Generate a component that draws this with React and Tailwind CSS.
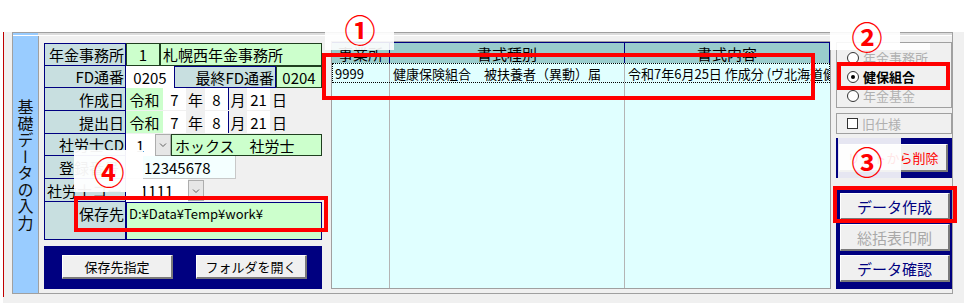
import React from "react";

const Chevron = () => (
  <svg width="10" height="10" viewBox="0 0 10 10" className="block">
    <path d="M2 3.5 L5 6.5 L8 3.5" fill="none" stroke="#606060" strokeWidth="1" />
  </svg>
);

function Radio({ checked, disabled, label }) {
  return (
    <div className="flex items-center h-[19px] pl-[10px] gap-[4px]">
      <div className="w-[12px] h-[12px] rounded-full border border-[#333333] bg-white flex items-center justify-center">
        {checked && <div className="w-[4px] h-[4px] rounded-full bg-black" />}
      </div>
      <span className={disabled ? "text-[13px] leading-none text-[#b0b0b0]" : "text-[13px] leading-none text-black font-bold"}>{label}</span>
    </div>
  );
}

export default function App() {
  return (
    <div className="relative w-[964px] h-[303px] bg-white overflow-hidden font-['Noto_Sans_CJK_JP','Noto_Sans',sans-serif] text-black">
      <div className="h-[32px]" />
      <div className="flex h-[271px] bg-[#f0f0f0]">
        <div className="w-[3px] bg-white" />
        <div className="w-[1px] h-[265px] bg-[#c00000]" />
        <div className="w-[8px]" />
        {/* frame */}
        <div className="w-[941px] h-[262px] border border-[#a0a0a0] flex flex-col">
          <div className="flex h-[2px]">
            <div className="w-[25px] bg-[#99ccff]" />
            <div className="flex-1 bg-[#dcdcdc]" />
          </div>
          <div className="h-[1px] bg-white" />
          <div className="flex h-[257px]">
            {/* blue side panel */}
            <div className="w-[25px] bg-[#99ccff] flex items-center justify-center">
              <span className="[writing-mode:vertical-rl] text-[16px] leading-none tracking-[0.5px] text-[#101010]">基礎データの入力</span>
            </div>
            <div className="w-[1px] bg-[#a0a0a0]" />
            {/* content */}
            <div className="flex items-start pl-[5px]">
              {/* left form */}
              <div className="w-[278px] mt-[7px] flex flex-col text-[15px] leading-none">
                {/* row 1 */}
                <div className="flex h-[23px]">
                  <div className="w-[82px] bg-[#c8dfe0] border border-[#000080] flex items-center justify-end pr-[1px]">年金事務所</div>
                  <div className="w-[34px] bg-[#ccffcc] border border-[#1f3f1f] flex items-center justify-center">1</div>
                  <div className="w-[162px] bg-[#ccffcc] border border-[#1f3f1f] flex items-center pl-[2px]">札幌西年金事務所</div>
                </div>
                {/* row 2 */}
                <div className="flex h-[22px]">
                  <div className="w-[82px] bg-[#c8dfe0] border-x border-b border-[#000080] flex items-center justify-end pr-[1px]">FD通番</div>
                  <div className="w-[48px] bg-white flex items-center justify-center">0205</div>
                  <div className="w-[102px] bg-[#c8dfe0] border border-[#000080] flex items-center justify-end pr-[1px]">最終FD通番</div>
                  <div className="w-[46px] bg-[#ccffcc] border border-[#1f3f1f] flex items-center justify-center">0204</div>
                </div>
                {/* row 3 */}
                <div className="flex h-[23px]">
                  <div className="w-[82px] bg-[#c8dfe0] border-x border-b border-[#000080] flex items-center justify-end pr-[1px]">作成日</div>
                  <div className="w-[37px] h-[22px] bg-[#ccffcc] flex items-center justify-center">令和</div>
                  <div className="w-[23px] h-[22px] bg-white flex items-center justify-center">7</div>
                  <div className="w-[19px] h-[22px] flex items-center justify-center">年</div>
                  <div className="w-[23px] h-[22px] bg-white flex items-center justify-center">8</div>
                  <div className="w-[19px] h-[22px] border-l border-[#000080] flex items-center justify-center">月</div>
                  <div className="w-[23px] h-[22px] bg-white flex items-center justify-center">21</div>
                  <div className="w-[19px] h-[22px] flex items-center justify-center">日</div>
                </div>
                {/* row 4 */}
                <div className="flex h-[23px]">
                  <div className="w-[82px] bg-[#c8dfe0] border-x border-b border-[#000080] flex items-center justify-end pr-[1px]">提出日</div>
                  <div className="w-[37px] h-[22px] bg-[#ccffcc] flex items-center justify-center">令和</div>
                  <div className="w-[23px] h-[22px] bg-white flex items-center justify-center">7</div>
                  <div className="w-[19px] h-[22px] flex items-center justify-center">年</div>
                  <div className="w-[23px] h-[22px] bg-white flex items-center justify-center">8</div>
                  <div className="w-[19px] h-[22px] border-l border-[#000080] flex items-center justify-center">月</div>
                  <div className="w-[23px] h-[22px] bg-white flex items-center justify-center">21</div>
                  <div className="w-[19px] h-[22px] flex items-center justify-center">日</div>
                </div>
                {/* row 5 */}
                <div className="flex h-[22px]">
                  <div className="w-[82px] bg-[#c8dfe0] border-x border-b border-[#000080] flex items-center justify-end pr-[1px]">社労士CD</div>
                  <div className="w-[29px] bg-white flex items-center pl-[10px]">1</div>
                  <div className="w-[16px] bg-[#e6e6e6] border border-[#adadad] flex items-center justify-center"><Chevron /></div>
                  <div className="w-[151px] bg-[#ccffcc] border border-[#1f3f1f] flex items-center pl-[3px]">ホックス　社労士</div>
                </div>
                {/* row 6 */}
                <div className="flex h-[23px]">
                  <div className="w-[82px] bg-[#c8dfe0] border-x border-b border-[#000080] flex items-center justify-end pr-[6px]">登録番号</div>
                  <div className="w-[110px] bg-[#f4ffff] border-r border-b border-[#c8c8c8] flex items-center pl-[18px]">12345678</div>
                </div>
                {/* row 7 */}
                <div className="flex h-[23px]">
                  <div className="w-[82px] bg-[#c8dfe0] border-x border-b border-[#000080] flex items-center pl-[2px] whitespace-nowrap">社労士コード</div>
                  <div className="w-[62px] bg-white flex items-center pl-[14px]">1111</div>
                  <div className="w-[16px] h-[21px] mt-[1px] bg-[#e6e6e6] border border-[#adadad] flex items-center justify-center"><Chevron /></div>
                </div>
                {/* row 8 */}
                <div className="flex h-[38px]">
                  <div className="w-[82px] bg-[#c8dfe0] border-x border-b border-[#000080] flex justify-end pr-[1px] pt-[4px]">保存先</div>
                  <div className="w-[196px] bg-[#ccffcc] border border-[#000080] pl-[2px] pt-[4px] text-[13px]">D:¥Data¥Temp¥work¥</div>
                </div>
                {/* navy button panel */}
                <div className="mt-[6px] h-[43px] bg-[#000080] flex items-start pt-[9px] pl-[18px] gap-[23px] text-[13px]">
                  <div className="w-[111px] h-[24px] bg-[#f0f0f0] border-t border-l border-t-white border-l-white border-r-2 border-b-2 border-r-[#7a7a7a] border-b-[#7a7a7a] flex items-center justify-center">保存先指定</div>
                  <div className="w-[111px] h-[24px] bg-[#f0f0f0] border-t border-l border-t-white border-l-white border-r-2 border-b-2 border-r-[#7a7a7a] border-b-[#7a7a7a] flex items-center justify-center">フォルダを開く</div>
                </div>
              </div>

              <div className="w-[9px]" />

              {/* grid */}
              <div className="mt-[5px] w-[500px] h-[248px] border border-[#a0a0a0] bg-[#e0ffff] flex flex-col">
                <div className="flex h-[21px] bg-[#99cccc] border-t border-[#000080] text-[15px] leading-none">
                  <div className="w-[58px] border-r border-[#000080] flex items-center justify-center">事業所</div>
                  <div className="w-[235px] border-r border-[#000080] flex items-center justify-center">書式種別</div>
                  <div className="flex-1 border-r border-[#000080] flex items-center justify-center">書式内容</div>
                </div>
                <div className="flex h-[20px] border border-dotted border-black text-[13px] leading-none whitespace-nowrap overflow-hidden">
                  <div className="w-[57px] border-r border-[#b4b4b4] flex items-center pl-[2px]">9999</div>
                  <div className="w-[235px] border-r border-[#b4b4b4] flex items-center pl-[3px]">健康保険組合　被扶養者（異動）届</div>
                  <div className="flex-1 flex items-center pl-[3px] overflow-hidden">令和7年6月25日 作成分 (ヴ北海道健康保険組合)</div>
                </div>
                <div className="flex flex-1">
                  <div className="w-[58px] border-r border-[#b4b4b4]" />
                  <div className="w-[235px] border-r border-[#b4b4b4]" />
                  <div className="flex-1" />
                </div>
              </div>

              <div className="w-[5px]" />

              {/* right column */}
              <div className="w-[116px] mt-[6px] flex flex-col">
                <div className="h-[66px] border border-[#a0a0a0] pt-[5px] flex flex-col">
                  <Radio disabled label="年金事務所" />
                  <Radio checked label="健保組合" />
                  <Radio disabled label="年金基金" />
                </div>
                <div className="mt-[5px] h-[21px] border border-[#a0a0a0] flex items-center pl-[10px] gap-[4px]">
                  <div className="w-[11px] h-[11px] border border-[#333333] bg-white" />
                  <span className="text-[13px] leading-none text-[#b0b0b0]">旧仕様</span>
                </div>
                <div className="mt-[4px] h-[40px] bg-[#000080] pt-[6px] pl-[3px]">
                  <div className="w-[109px] h-[28px] bg-[#f0f0f0] border-t border-l border-t-white border-l-white border-r-2 border-b-2 border-r-[#7a7a7a] border-b-[#7a7a7a] flex items-center justify-center text-[13px] leading-none text-[#ff0000]">リストから削除</div>
                </div>
                <div className="mt-[12px] h-[99px] bg-[#000080] pt-[3px] pl-[4px] flex flex-col gap-[4px] text-[15px] leading-none">
                  <div className="w-[110px] h-[27px] bg-[#f0f0f0] border-t border-l border-t-white border-l-white border-r-2 border-b-2 border-r-[#7a7a7a] border-b-[#7a7a7a] flex items-center justify-center text-[#000080]">データ作成</div>
                  <div className="w-[110px] h-[27px] bg-[#f0f0f0] border-t border-l border-t-white border-l-white border-r-2 border-b-2 border-r-[#7a7a7a] border-b-[#7a7a7a] flex items-center justify-center text-[#a8a8a8]">総括表印刷</div>
                  <div className="w-[110px] h-[27px] bg-[#f0f0f0] border-t border-l border-t-white border-l-white border-r-2 border-b-2 border-r-[#7a7a7a] border-b-[#7a7a7a] flex items-center justify-center text-[#000080]">データ確認</div>
                </div>
              </div>
            </div>
          </div>
        </div>
        <div className="flex-1" />
      </div>

      {/* annotation overlays */}
      <div className="absolute left-[325px] top-0 w-[69px] h-[50px] bg-white/90" />
      <div className="absolute left-[830px] top-0 w-[70px] h-[50px] bg-white/90" />
      <div className="absolute left-[837px] top-[43px] w-[93px] h-[7px] bg-white/85" />
      <div className="absolute left-[838px] top-[138px] w-[63px] h-[40px] bg-white/90" />
      <div className="absolute left-[74px] top-[150px] w-[69px] h-[42px] bg-white/95" />

      <div className="absolute left-[340px] top-[8px] w-[40px] h-[40px] flex items-center justify-center text-[31px] font-bold leading-none text-[#ff0000]">①</div>
      <div className="absolute left-[847px] top-[15px] w-[40px] h-[40px] flex items-center justify-center text-[31px] font-bold leading-none text-[#ff0000]">②</div>
      <div className="absolute left-[847px] top-[140px] w-[40px] h-[40px] flex items-center justify-center text-[31px] font-bold leading-none text-[#ff0000]">③</div>
      <div className="absolute left-[89px] top-[150px] w-[40px] h-[40px] flex items-center justify-center text-[31px] font-bold leading-none text-[#ff0000]">④</div>

      <div className="absolute left-[322px] top-[53px] w-[493px] h-[47px] border-4 border-[#ff0000]" />
      <div className="absolute left-[837px] top-[62px] w-[113px] h-[28px] border-4 border-[#ff0000]" />
      <div className="absolute left-[833px] top-[186px] w-[124px] h-[37px] border-4 border-[#ff0000]" />
      <div className="absolute left-[74px] top-[196px] w-[254px] h-[36px] border-4 border-[#ff0000]" />
    </div>
  );
}
